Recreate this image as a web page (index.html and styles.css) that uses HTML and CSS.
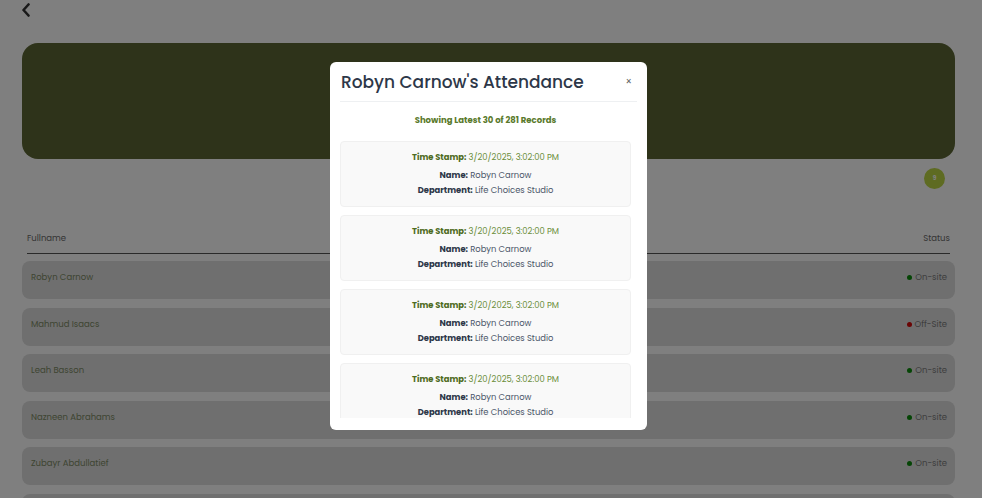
FILE: index.html
```html
<!DOCTYPE html>
<html lang="en">
<head>
<meta charset="utf-8">
<title>Attendance</title>
<link rel="stylesheet" href="styles.css">
</head>
<body>
<div class="page">
  <button class="back" aria-label="Back">
    <svg width="10" height="14" viewBox="0 0 10 14"><path d="M7.5 1.5 L2.5 7 L7.5 12.5" fill="none" stroke="#333" stroke-width="2.6" stroke-linecap="round" stroke-linejoin="round"/></svg>
  </button>
  <div class="banner"></div>
  <div class="badge-row"><span class="badge">9</span></div>
  <div class="table-head">
    <span>Fullname</span>
    <span>Status</span>
  </div>
  <div class="rows">
    <div class="row"><span class="name">Robyn Carnow</span><span class="status"><i class="dot on"></i>On-site</span></div>
    <div class="row"><span class="name">Mahmud Isaacs</span><span class="status"><i class="dot off"></i>Off-Site</span></div>
    <div class="row"><span class="name">Leah Basson</span><span class="status"><i class="dot on"></i>On-site</span></div>
    <div class="row"><span class="name">Nazneen Abrahams</span><span class="status"><i class="dot on"></i>On-site</span></div>
    <div class="row"><span class="name">Zubayr Abdullatief</span><span class="status"><i class="dot on"></i>On-site</span></div>
    <div class="row"></div>
  </div>
</div>

<div class="overlay">
  <div class="modal">
    <div class="modal-head">
      <h2>Robyn Carnow's Attendance</h2>
      <span class="close">×</span>
    </div>
    <div class="modal-body">
      <p class="summary">Showing Latest 30 of 281 Records</p>
      <div class="record">
        <p class="ts"><b>Time Stamp:</b> 3/20/2025, 3:02:00 PM</p>
        <p><b>Name:</b> Robyn Carnow</p>
        <p><b>Department:</b> Life Choices Studio</p>
      </div>
      <div class="record">
        <p class="ts"><b>Time Stamp:</b> 3/20/2025, 3:02:00 PM</p>
        <p><b>Name:</b> Robyn Carnow</p>
        <p><b>Department:</b> Life Choices Studio</p>
      </div>
      <div class="record">
        <p class="ts"><b>Time Stamp:</b> 3/20/2025, 3:02:00 PM</p>
        <p><b>Name:</b> Robyn Carnow</p>
        <p><b>Department:</b> Life Choices Studio</p>
      </div>
      <div class="record">
        <p class="ts"><b>Time Stamp:</b> 3/20/2025, 3:02:00 PM</p>
        <p><b>Name:</b> Robyn Carnow</p>
        <p><b>Department:</b> Life Choices Studio</p>
      </div>
    </div>
  </div>
</div>
</body>
</html>
```
FILE: styles.css
```css
* { box-sizing: border-box; }
html, body { margin: 0; height: 100%; overflow: hidden; }
body {
  font-family: "Poppins", Inter, "Noto Sans", sans-serif;
  background: #fff;
  color: #333;
}
.page {
  padding: 0 27px 0 22px;
}
.back {
  display: block;
  margin: 3px 0 0 -1px;
  padding: 0;
  border: 0;
  background: none;
  width: 10px;
  height: 14px;
}
.back svg { display: block; }
.banner {
  margin-top: 26px;
  height: 116px;
  border-radius: 16px;
  background: #5c6634;
}
.badge-row {
  display: flex;
  justify-content: flex-end;
  padding: 9px 10px 0 0;
}
.badge {
  width: 21px;
  height: 21px;
  border-radius: 50%;
  background: #bcd644;
  color: #fff;
  font-size: 6px;
  font-weight: 700;
  display: flex;
  align-items: center;
  justify-content: center;
}
.table-head {
  display: flex;
  justify-content: space-between;
  margin: 43px 5px 0 5px;
  padding-bottom: 8px;
  border-bottom: 1px solid #555;
  font-size: 8.5px;
  color: #6a6a6a;
}
.rows {
  display: flex;
  flex-direction: column;
  gap: 8.5px;
  margin-top: 7px;
}
.row {
  height: 38px;
  flex: none;
  border-radius: 8px;
  background: #dfdfdf;
  display: flex;
  justify-content: space-between;
  align-items: flex-start;
  padding: 10px 8px 0 9px;
  font-size: 8.5px;
}
.name { color: #7c8a64; }
.status { color: #7c7c7c; display: flex; align-items: center; gap: 3px; }
.dot { width: 5px; height: 5px; border-radius: 50%; display: inline-block; }
.dot.on { background: #0b8a0b; }
.dot.off { background: #d40a0a; }

.overlay {
  position: fixed;
  inset: 0;
  background: rgba(0, 0, 0, 0.5);
}
.modal {
  position: absolute;
  left: 330px;
  top: 62px;
  width: 317px;
  height: 368px;
  background: #fff;
  border-radius: 6px;
  display: flex;
  flex-direction: column;
  padding-bottom: 12px;
}
.modal-head {
  margin: 0 10px;
  height: 40px;
  flex: none;
  border-bottom: 1px solid #eef0f2;
  display: flex;
  align-items: center;
  justify-content: space-between;
}
.modal-head h2 {
  margin: 0 0 0 1px;
  font-size: 17px;
  font-weight: 500;
  color: #2d3748;
}
.close {
  font-size: 10px;
  color: #666;
  margin-right: 5px;
}
.modal-body {
  flex: 1;
  overflow: hidden;
  padding: 0 16px 0 10px;
}
.summary {
  margin: 12px 0 14px;
  text-align: center;
  font-size: 8.5px;
  font-weight: 700;
  color: #5a7a2c;
}
.record {
  background: #f9f9f9;
  border: 1px solid #f0f0f0;
  border-radius: 4px;
  height: 66px;
  margin-bottom: 8px;
  padding-top: 8px;
  text-align: center;
  font-size: 8.4px;
  color: #4a5568;
}
.record p { margin: 0; line-height: 15px; }
.record p.ts { margin-bottom: 3px; color: #6b8e3a; }
.record p.ts b { color: #4e6b22; }
.record b { color: #2d3748; font-weight: 700; }
```
